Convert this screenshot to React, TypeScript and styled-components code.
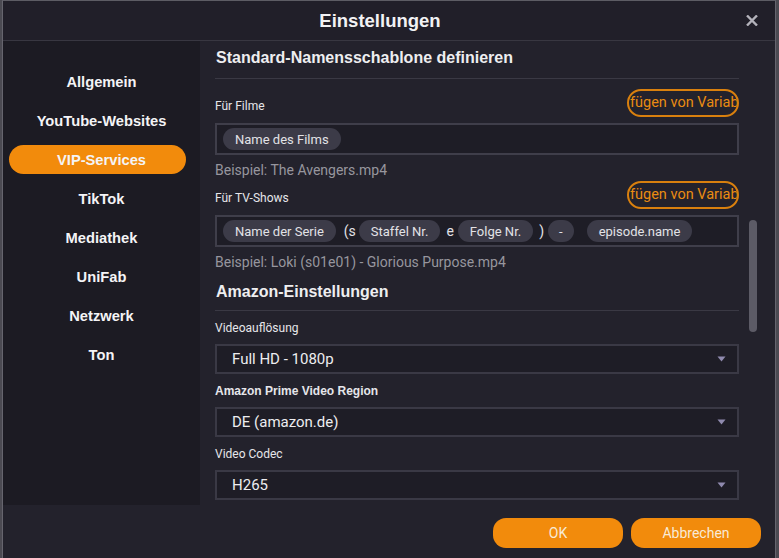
import React from 'react';
import styled, { createGlobalStyle } from 'styled-components';

const GlobalStyle = createGlobalStyle`
  html, body {
    margin: 0;
    padding: 0;
    background: #4b4a52;
    overflow: hidden;
  }
`;

const navItems = [
  'Allgemein',
  'YouTube-Websites',
  'VIP-Services',
  'TikTok',
  'Mediathek',
  'UniFab',
  'Netzwerk',
  'Ton',
];

type Part = { kind: 'chip' | 'text'; label: string };

const tvParts: Part[] = [
  { kind: 'chip', label: 'Name der Serie' },
  { kind: 'text', label: '(s' },
  { kind: 'chip', label: 'Staffel Nr.' },
  { kind: 'text', label: 'e' },
  { kind: 'chip', label: 'Folge Nr.' },
  { kind: 'text', label: ')' },
  { kind: 'chip', label: '-' },
  { kind: 'chip', label: 'episode.name' },
];

const CloseIcon = () => (
  <svg width="12" height="11" viewBox="0 0 12 11">
    <path d="M1 0.5 L11 10.5 M11 0.5 L1 10.5" stroke="#b4b3bb" strokeWidth="2.4" />
  </svg>
);

const Caret = () => (
  <svg width="9" height="6" viewBox="0 0 9 6">
    <path d="M0.5 0.5 L8.5 0.5 L4.5 5.5 Z" fill="#8f8aae" />
  </svg>
);

const App: React.FC = () => (
  <Screen>
    <GlobalStyle />
    <Window>
      <TitleBar>
        <Title>Einstellungen</Title>
        <CloseButton>
          <CloseIcon />
        </CloseButton>
      </TitleBar>

      <Body>
        <Sidebar>
          {navItems.map((item) => (
            <NavItem key={item} active={item === 'VIP-Services'}>
              {item}
            </NavItem>
          ))}
        </Sidebar>

        <Main>
          <Scroll>
            <SectionTitle>Standard-Namensschablone definieren</SectionTitle>

            <FieldHeader>
              <Label>Für Filme</Label>
              <VarButton>fügen von Variablen</VarButton>
            </FieldHeader>
            <TemplateBox>
              <Chip>Name des Films</Chip>
            </TemplateBox>
            <Example>Beispiel: The Avengers.mp4</Example>

            <FieldHeader tight>
              <Label>Für TV-Shows</Label>
              <VarButton>fügen von Variablen</VarButton>
            </FieldHeader>
            <TemplateBox>
              {tvParts.map((p, i) =>
                p.kind === 'chip' ? (
                  <Chip key={i} narrow={p.label === '-'}>
                    {p.label}
                  </Chip>
                ) : (
                  <Sep key={i}>{p.label}</Sep>
                )
              )}
            </TemplateBox>
            <Example>Beispiel: Loki (s01e01) - Glorious Purpose.mp4</Example>

            <SectionTitle spaced>Amazon-Einstellungen</SectionTitle>

            <FieldLabel>Videoauflösung</FieldLabel>
            <Select>
              <span>Full HD - 1080p</span>
              <Caret />
            </Select>

            <FieldLabel bold>Amazon Prime Video Region</FieldLabel>
            <Select>
              <span>DE (amazon.de)</span>
              <Caret />
            </Select>

            <FieldLabel>Video Codec</FieldLabel>
            <Select>
              <span>H265</span>
              <Caret />
            </Select>
          </Scroll>
          <ScrollThumb />
        </Main>
      </Body>

      <Footer>
        <ActionButton>OK</ActionButton>
        <ActionButton>Abbrechen</ActionButton>
      </Footer>
    </Window>
  </Screen>
);

// Styles
const Screen = styled.div`
  display: flex;
  height: 558px;
  padding: 0 3px 0 2px;
  box-sizing: border-box;
`;

const Window = styled.div`
  flex: 1;
  display: flex;
  flex-direction: column;
  background: #23222c;
  border-left: 1px solid #66656e;
  border-right: 1px solid #66656e;
  border-top: 1px solid #5d5c64;
  font-family: 'Liberation Sans', Arial, sans-serif;
  overflow: hidden;
`;

const TitleBar = styled.div`
  position: relative;
  height: 39px;
  flex-shrink: 0;
  display: flex;
  align-items: center;
  justify-content: center;
  background: #211f29;
  border-bottom: 1px solid #383741;
`;

const Title = styled.div`
  color: #f2f2f4;
  font-size: 18.5px;
  font-weight: bold;
  padding-right: 18px;
`;

const CloseButton = styled.div`
  position: absolute;
  right: 17px;
  top: 14px;
  display: flex;
`;

const Body = styled.div`
  display: flex;
  height: 464px;
  flex-shrink: 0;
`;

const Sidebar = styled.div`
  width: 197px;
  flex-shrink: 0;
  background: #1c1b23;
  padding-top: 26px;
  box-sizing: border-box;
  display: flex;
  flex-direction: column;
  gap: 10px;
`;

const NavItem = styled.div<{ active?: boolean }>`
  width: 177px;
  height: 29px;
  margin-left: 6px;
  padding-left: 8px;
  box-sizing: border-box;
  border-radius: 15px;
  display: flex;
  align-items: center;
  justify-content: center;
  font-size: 14.7px;
  font-weight: bold;
  color: #f4f4f6;
  background: ${(p) => (p.active ? '#f28b0c' : 'transparent')};
`;

const Main = styled.div`
  position: relative;
  flex: 1;
  overflow: hidden;
`;

const Scroll = styled.div`
  width: 524px;
  padding: 7px 0 0 15px;
  display: flex;
  flex-direction: column;
  font-family: Roboto, 'Liberation Sans', sans-serif;
`;

const SectionTitle = styled.div<{ spaced?: boolean }>`
  font-family: 'Liberation Sans', Arial, sans-serif;
  font-size: 16px;
  font-weight: bold;
  line-height: 20px;
  color: #eeeef0;
  padding: 0 0 ${(p) => (p.spaced ? '8px' : '10px')} 1px;
  margin-top: ${(p) => (p.spaced ? '12px' : '0')};
  border-bottom: 1px solid #3a3944;
`;

const FieldHeader = styled.div<{ tight?: boolean }>`
  display: flex;
  justify-content: space-between;
  align-items: flex-end;
  height: 28px;
  margin-top: ${(p) => (p.tight ? '3px' : '10px')};
`;

const Label = styled.div`
  font-size: 12px;
  line-height: 16px;
  color: #e6e6ea;
  padding-bottom: 3px;
`;

const VarButton = styled.div`
  width: 112px;
  height: 28px;
  box-sizing: border-box;
  border: 2px solid #d9800e;
  border-radius: 14px;
  color: #ea8c12;
  font-size: 14.5px;
  line-height: 24px;
  padding-left: 1px;
  white-space: nowrap;
  overflow: hidden;
`;

const TemplateBox = styled.div`
  height: 32px;
  margin-top: 6px;
  box-sizing: border-box;
  border: 2px solid #3f3e4a;
  background: #1e1d26;
  display: flex;
  align-items: center;
  padding-left: 6px;
`;

const Chip = styled.div<{ narrow?: boolean }>`
  height: 22px;
  padding: 0 ${(p) => (p.narrow ? '11px' : '12px')};
  border-radius: 11px;
  background: #3c3b48;
  color: #e2e2e6;
  font-size: 13px;
  display: flex;
  align-items: center;
  margin-right: ${(p) => (p.narrow ? '13px' : '0')};
`;

const Sep = styled.span`
  color: #e2e2e6;
  font-size: 14px;
  padding: 0 4px 0 6px;
  &:first-of-type {
    padding: 0 3px 0 8px;
  }
`;

const Example = styled.div`
  margin-top: 7px;
  font-size: 14px;
  line-height: 16px;
  color: #97969e;
`;

const FieldLabel = styled.div<{ bold?: boolean }>`
  margin-top: 9px;
  font-family: ${(p) => (p.bold ? "'Liberation Sans', Arial, sans-serif" : 'inherit')};
  font-size: 12px;
  font-weight: ${(p) => (p.bold ? 'bold' : 'normal')};
  line-height: 16px;
  color: #e6e6ea;
`;

const Select = styled.div`
  height: 30px;
  margin-top: 8px;
  box-sizing: border-box;
  border: 2px solid #3a3945;
  background: #1e1d26;
  display: flex;
  align-items: center;
  justify-content: space-between;
  padding: 0 11px 0 15px;
  color: #ededf0;
  font-size: 15px;
`;

const ScrollThumb = styled.div`
  position: absolute;
  right: 18px;
  top: 179px;
  width: 8px;
  height: 112px;
  border-radius: 4px;
  background: #5c5b66;
`;

const Footer = styled.div`
  flex: 1;
  display: flex;
  justify-content: flex-end;
  align-items: flex-start;
  gap: 8px;
  padding: 13px 14px 0 0;
  background: #23222c;
`;

const ActionButton = styled.div`
  width: 130px;
  height: 30px;
  border-radius: 13px;
  background: #f28b0c;
  color: #f8ead6;
  font-family: Roboto, 'Liberation Sans', sans-serif;
  font-size: 14px;
  display: flex;
  align-items: center;
  justify-content: center;
`;

export default App;
